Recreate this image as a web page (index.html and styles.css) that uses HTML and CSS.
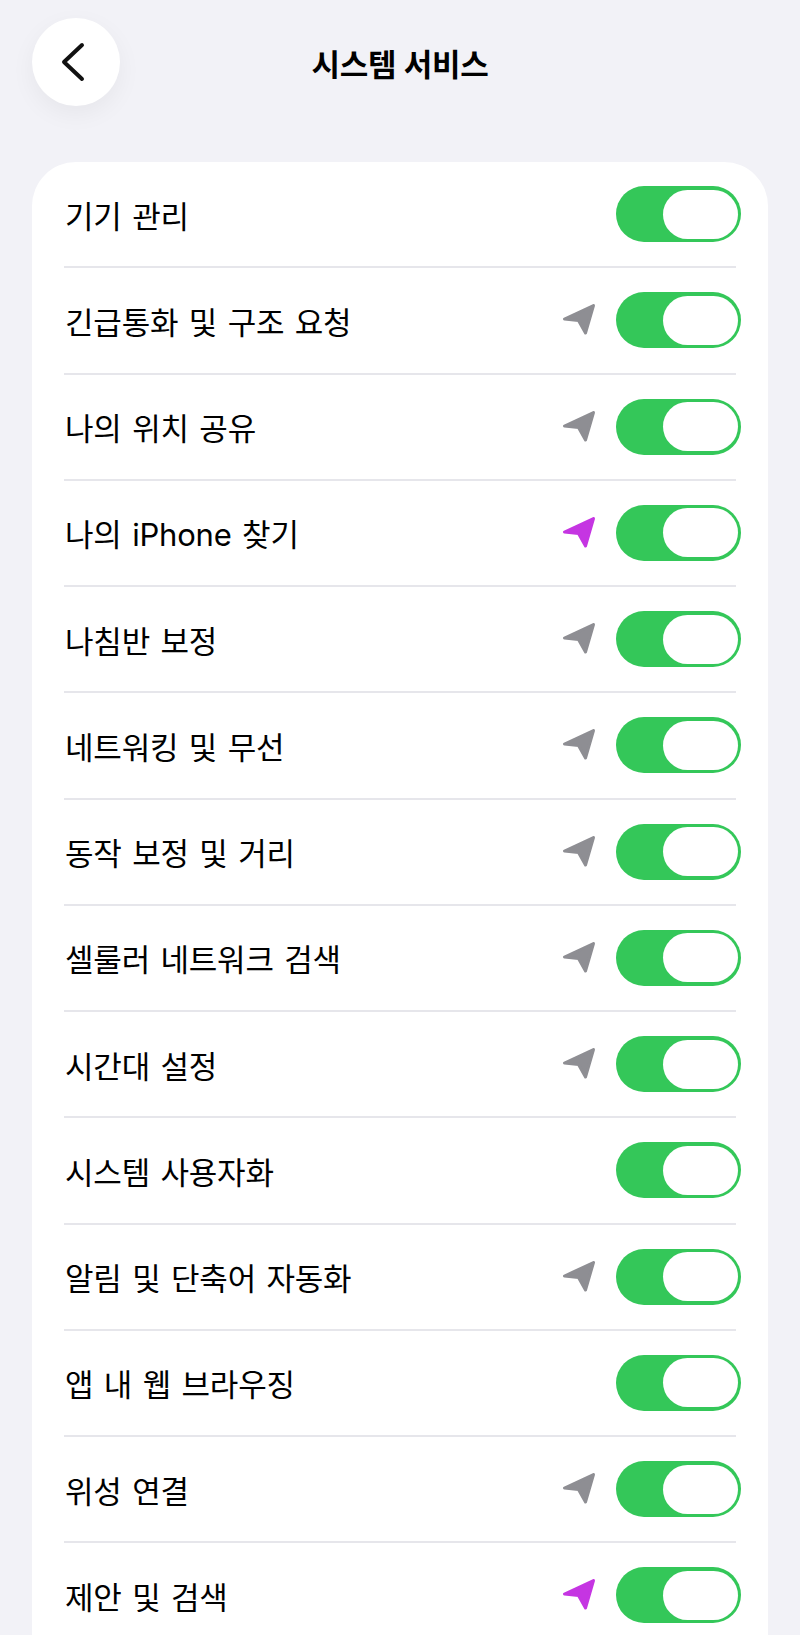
FILE: index.html
```html
<!DOCTYPE html>
<html lang="ko">
<head>
    <meta charset="UTF-8">
    <meta name="viewport" content="width=device-width, initial-scale=1.0">
    <title>시스템 서비스</title>
    <link rel="stylesheet" href="styles.css">
</head>
<body>

    <header class="nav">
        <button class="back" type="button" aria-label="뒤로">
            <svg width="30" height="44" viewBox="0 0 30 44">
                <polyline points="21,5 3,22 21,39" fill="none" stroke="#111" stroke-width="4" stroke-linecap="round" stroke-linejoin="round"/>
            </svg>
        </button>
        <h1 class="title">시스템 서비스</h1>
        <span class="nav-spacer"></span>
    </header>

    <ul class="list">
        <li class="row">
            <span class="label">기기 관리</span>
            <span class="switch"><span class="knob"></span></span>
        </li>
        <li class="row">
            <span class="label">긴급통화 및 구조 요청</span>
            <svg class="arrow gray" viewBox="0 0 36 36"><polygon points="32.5,3.5 3.5,17 17.5,18.5 24.5,31"/></svg>
            <span class="switch"><span class="knob"></span></span>
        </li>
        <li class="row">
            <span class="label">나의 위치 공유</span>
            <svg class="arrow gray" viewBox="0 0 36 36"><polygon points="32.5,3.5 3.5,17 17.5,18.5 24.5,31"/></svg>
            <span class="switch"><span class="knob"></span></span>
        </li>
        <li class="row">
            <span class="label">나의 iPhone 찾기</span>
            <svg class="arrow purple" viewBox="0 0 36 36"><polygon points="32.5,3.5 3.5,17 17.5,18.5 24.5,31"/></svg>
            <span class="switch"><span class="knob"></span></span>
        </li>
        <li class="row">
            <span class="label">나침반 보정</span>
            <svg class="arrow gray" viewBox="0 0 36 36"><polygon points="32.5,3.5 3.5,17 17.5,18.5 24.5,31"/></svg>
            <span class="switch"><span class="knob"></span></span>
        </li>
        <li class="row">
            <span class="label">네트워킹 및 무선</span>
            <svg class="arrow gray" viewBox="0 0 36 36"><polygon points="32.5,3.5 3.5,17 17.5,18.5 24.5,31"/></svg>
            <span class="switch"><span class="knob"></span></span>
        </li>
        <li class="row">
            <span class="label">동작 보정 및 거리</span>
            <svg class="arrow gray" viewBox="0 0 36 36"><polygon points="32.5,3.5 3.5,17 17.5,18.5 24.5,31"/></svg>
            <span class="switch"><span class="knob"></span></span>
        </li>
        <li class="row">
            <span class="label">셀룰러 네트워크 검색</span>
            <svg class="arrow gray" viewBox="0 0 36 36"><polygon points="32.5,3.5 3.5,17 17.5,18.5 24.5,31"/></svg>
            <span class="switch"><span class="knob"></span></span>
        </li>
        <li class="row">
            <span class="label">시간대 설정</span>
            <svg class="arrow gray" viewBox="0 0 36 36"><polygon points="32.5,3.5 3.5,17 17.5,18.5 24.5,31"/></svg>
            <span class="switch"><span class="knob"></span></span>
        </li>
        <li class="row">
            <span class="label">시스템 사용자화</span>
            <span class="switch"><span class="knob"></span></span>
        </li>
        <li class="row">
            <span class="label">알림 및 단축어 자동화</span>
            <svg class="arrow gray" viewBox="0 0 36 36"><polygon points="32.5,3.5 3.5,17 17.5,18.5 24.5,31"/></svg>
            <span class="switch"><span class="knob"></span></span>
        </li>
        <li class="row">
            <span class="label">앱 내 웹 브라우징</span>
            <span class="switch"><span class="knob"></span></span>
        </li>
        <li class="row">
            <span class="label">위성 연결</span>
            <svg class="arrow gray" viewBox="0 0 36 36"><polygon points="32.5,3.5 3.5,17 17.5,18.5 24.5,31"/></svg>
            <span class="switch"><span class="knob"></span></span>
        </li>
        <li class="row">
            <span class="label">제안 및 검색</span>
            <svg class="arrow purple" viewBox="0 0 36 36"><polygon points="32.5,3.5 3.5,17 17.5,18.5 24.5,31"/></svg>
            <span class="switch"><span class="knob"></span></span>
        </li>
    </ul>

</body>
</html>
```

FILE: styles.css
```css
body {
    font-family: Inter, "Noto Sans CJK KR", sans-serif;
    background-color: #f2f2f7;
    color: #000;
    margin: 0;
    padding: 18px 32px 0;
    height: 1635px;
    box-sizing: border-box;
    overflow: hidden;
}

.nav {
    display: grid;
    grid-template-columns: 88px 1fr 88px;
    align-items: center;
    height: 88px;
}

.back {
    width: 88px;
    height: 88px;
    border: none;
    border-radius: 50%;
    background-color: #fff;
    box-shadow: 0 8px 24px rgba(0, 0, 0, 0.05);
    display: flex;
    align-items: center;
    justify-content: center;
    padding: 0;
    cursor: pointer;
}

.title {
    margin: 0;
    text-align: center;
    font-size: 31px;
    font-weight: 600;
    letter-spacing: -0.3px;
}

.list {
    list-style: none;
    margin: 56px 0 0;
    padding: 0 32px 80px;
    background-color: #fff;
    border-radius: 44px;
}

.row {
    display: flex;
    align-items: center;
    height: 104.25px;
    border-bottom: 2px solid #e6e6eb;
}

.row:last-child {
    border-bottom: none;
}

.label {
    flex: 1;
    font-size: 31px;
    padding-left: 1px;
    letter-spacing: -0.2px;
    word-spacing: 2px;
}

.arrow {
    width: 36px;
    height: 36px;
    margin-right: 19px;
    stroke-width: 3;
    stroke-linejoin: round;
}

.arrow.gray {
    fill: #8e8e93;
    stroke: #8e8e93;
}

.arrow.purple {
    fill: #c535e2;
    stroke: #c535e2;
}

.switch {
    display: flex;
    justify-content: flex-end;
    align-items: center;
    width: 125px;
    height: 56px;
    box-sizing: border-box;
    padding: 3.5px;
    margin-right: -5px;
    border-radius: 28px;
    background-color: #34c759;
}

.knob {
    width: 75px;
    height: 49px;
    border-radius: 25px;
    background-color: #fff;
}
```
